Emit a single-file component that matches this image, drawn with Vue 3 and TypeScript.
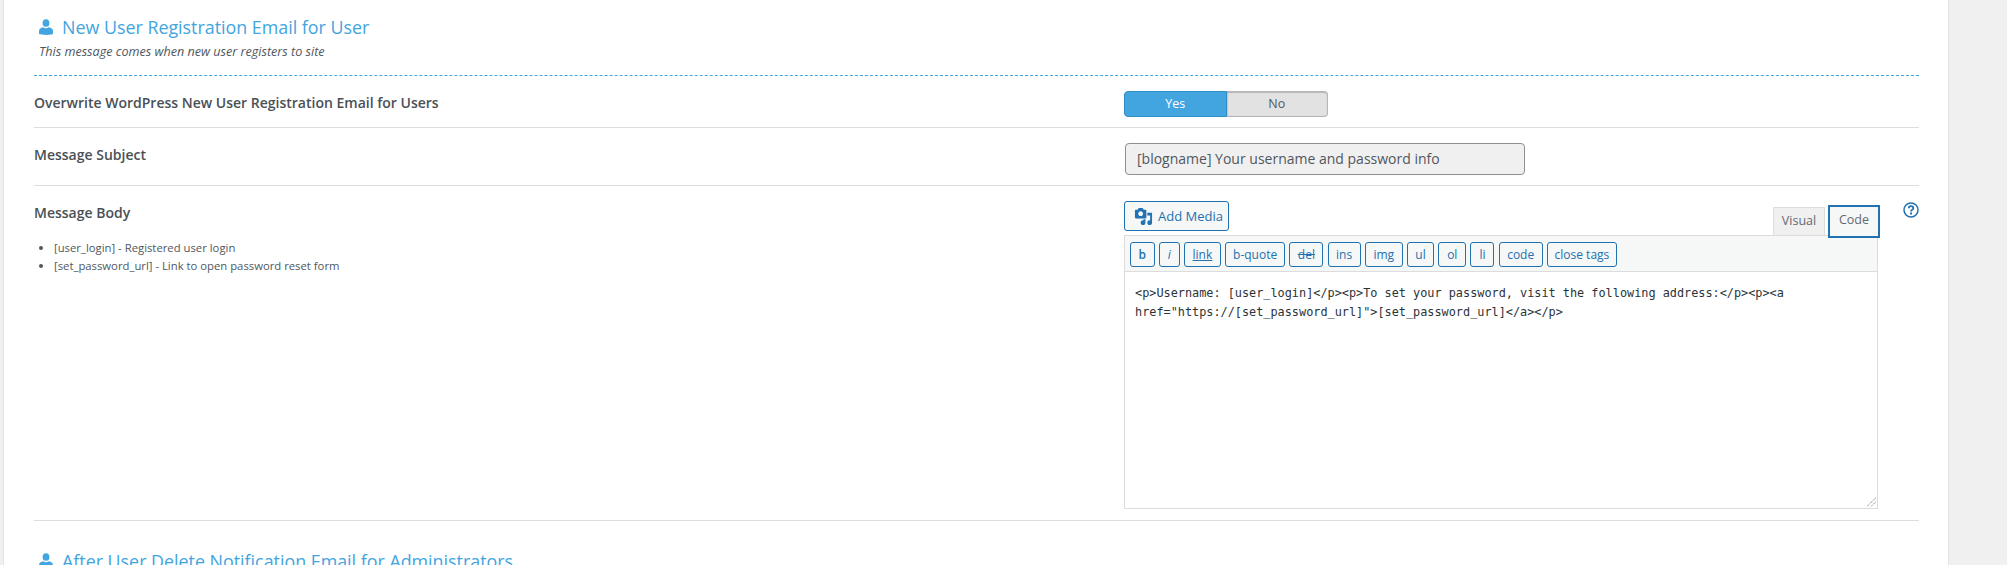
<script setup lang="ts">
interface Tag { label: string; width: number }
const tags: Tag[] = [
  { label: 'b', width: 24.5 },
  { label: 'i', width: 21 },
  { label: 'link', width: 37 },
  { label: 'b-quote', width: 60 },
  { label: 'del', width: 34 },
  { label: 'ins', width: 33 },
  { label: 'img', width: 38 },
  { label: 'ul', width: 27 },
  { label: 'ol', width: 28 },
  { label: 'li', width: 24 },
  { label: 'code', width: 44 },
  { label: 'close tags', width: 70 },
]
const body = '<p>Username: [user_login]</p><p>To set your password, visit the following address:</p><p><a href="https://[set_password_url]">[set_password_url]</a></p>'
</script>

<template>
  <div class="page">
    <main class="panel">
      <header class="head">
        <h2 class="title">
          <svg class="person" viewBox="0 0 16 18"><ellipse cx="8" cy="4.400" rx="3.900" ry="4.400" /><path d="M0 16.500v-3C0 11 2.300 9.800 4.800 9.200c.9.900 2 1.300 3.200 1.300s2.300-.4 3.200-1.300C13.700 9.800 16 11 16 13.500v3c0 .9-1.600 1.500-8 1.500s-8-.6-8-1.500z" /></svg>
          New User Registration Email for User
        </h2>
        <p class="sub">This message comes when new user registers to site</p>
      </header>

      <section class="row row-toggle">
        <div class="label">Overwrite WordPress New User Registration Email for Users</div>
        <div class="toggle"><span class="yes">Yes</span><span class="no">No</span></div>
      </section>

      <section class="row row-subject">
        <div class="label">Message Subject</div>
        <div class="subject">[blogname] Your username and password info</div>
      </section>

      <section class="row row-body">
        <div class="left">
          <div class="label">Message Body</div>
          <ul class="hints">
            <li>[user_login] - Registered user login</li>
            <li>[set_password_url] - Link to open password reset form</li>
          </ul>
        </div>
        <div class="editor">
          <div class="editor-top">
            <button class="media">
              <svg class="media-ic" viewBox="0 0 20 20"><path fill-rule="evenodd" d="M13 11V4c0-.55-.45-1-1-1h-1.670L9 1H5L3.670 3H2c-.55 0-1 .45-1 1v7c0 .55.45 1 1 1h10c.55 0 1-.45 1-1zM7 4.500c1.380 0 2.500 1.120 2.500 2.500S8.380 9.500 7 9.500 4.500 8.380 4.500 7 5.620 4.500 7 4.500zM14 6h5v10.500c0 1.380-1.120 2.500-2.500 2.500S14 17.880 14 16.500s1.120-2.500 2.500-2.500c.17 0 .34.020.5.050V9h-3V6zm-4 8.050V13h2v3.500c0 1.380-1.120 2.500-2.500 2.500S7 17.880 7 16.500 8.120 14 9.500 14c.17 0 .34.020.5.050z" /></svg>
              Add Media
            </button>
            <div class="tabs">
              <span class="tab">Visual</span>
              <span class="tab active">Code</span>
            </div>
          </div>
          <div class="toolbar">
            <button
              v-for="t in tags"
              :key="t.label"
              class="qt"
              :class="'qt-' + t.label.replace(' ', '-')"
              :style="{ width: t.width + 'px' }"
            >{{ t.label }}</button>
          </div>
          <div class="code">{{ body }}<svg class="grip" viewBox="0 0 10 10"><path d="M9.500 1 1 9.500M9.500 5 5 9.500" /></svg></div>
        </div>
        <svg class="help" viewBox="0 0 16 16"><circle cx="8" cy="8" r="7" /><path class="q" d="M5.700 6.300C5.800 5 6.800 4.200 8 4.200s2.300.8 2.300 2c0 1.700-2.300 1.600-2.300 3.300" /><path class="dot" d="M7 10.600h2v1.900H7z" /></svg>
      </section>

      <h2 class="title next">
        <svg class="person" viewBox="0 0 16 18"><ellipse cx="8" cy="4.400" rx="3.900" ry="4.400" /><path d="M0 16.500v-3C0 11 2.300 9.800 4.800 9.200c.9.900 2 1.300 3.200 1.300s2.300-.4 3.200-1.300C13.700 9.800 16 11 16 13.500v3c0 .9-1.600 1.500-8 1.500s-8-.6-8-1.500z" /></svg>
        After User Delete Notification Email for Administrators
      </h2>
    </main>
  </div>
</template>

<style>
html, body { margin: 0; background: #f0f0f0; overflow: hidden; }
</style>

<style scoped>
.page { height: 565px; overflow: hidden; padding-left: 3px; font-family: "Open Sans", sans-serif; color: #50575e; }
.panel { width: 1946px; height: 565px; box-sizing: border-box; background: #fff; border-left: 1px solid #e2e2e2; border-right: 1px solid #e2e2e2; padding: 0 29px 0 30px; overflow: hidden; }
.head { height: 76px; box-sizing: border-box; padding: 13px 0 0 5px; border-bottom: 1px dashed #42a5e0; }
.title { margin: 0; display: flex; align-items: center; gap: 9px; font-size: 17.850px; line-height: 28px; font-weight: 400; color: #42a5e0; }
.person { width: 14px; height: 16px; fill: #42a5e0; flex: none; }
.sub { margin: 2px 0 0; font-size: 12.600px; line-height: 18px; font-style: italic; color: #50575e; }
.row { display: grid; grid-template-columns: 1090px 1fr; border-bottom: 1px solid #dedede; box-sizing: border-box; }
.row-toggle { height: 52px; padding-top: 15px; }
.row-subject { height: 58px; padding-top: 15px; }
.row-body { height: 335px; padding-top: 15px; position: relative; }
.label { font-size: 14px; font-weight: 600; line-height: 24px; color: #4a5056; }
.toggle { display: flex; width: 204px; height: 26px; font-size: 12.500px; line-height: 24px; text-align: center; }
.yes { flex: 1; background: #42a5e0; color: #fff; border: 1px solid #2f8cc4; border-radius: 4px 0 0 4px; }
.no { flex: 1; background: #e2e2e2; color: #50575e; border: 1px solid #b5b5b5; border-left: 0; border-radius: 0 4px 4px 0; box-shadow: inset 0 1px 1px rgba(0, 0, 0, .18), inset 1px 0 1px rgba(0, 0, 0, .12); }
.subject { margin: 0 0 0 1px; width: 400px; height: 32px; box-sizing: border-box; padding: 0 11px; background: #f0f0f1; border: 1px solid #8c8f94; border-radius: 4px; font-size: 14px; line-height: 30px; color: #50575e; }
.hints { margin: 14px 0 0; padding: 0 0 0 20px; font-size: 11.300px; line-height: 18px; color: #50575e; }
.editor { width: 754px; display: flex; flex-direction: column; }
.editor-top { display: flex; justify-content: space-between; align-items: flex-start; height: 34px; }
.media { display: inline-flex; align-items: center; gap: 5px; width: 105px; height: 30px; padding: 0 0 0 9px; box-sizing: border-box; background: #f6f7f7; border: 1px solid #2271b1; border-radius: 3px; font: 13px "Open Sans", sans-serif; color: #2271b1; }
.media-ic { width: 19px; height: 19px; fill: #2271b1; flex: none; }
.tabs { position: relative; z-index: 1; display: flex; align-items: flex-end; gap: 3px; height: 37px; margin-right: -2px; }
.tab { box-sizing: border-box; width: 52px; height: 28px; margin-bottom: 3px; border: 1px solid #dcdcde; border-bottom: 0; background: #f0f0f1; font-size: 12.500px; line-height: 26px; text-align: center; color: #646970; }
.tab.active { height: 33px; margin-bottom: 0; background: #f6f7f7; border: 2px solid #2271b1; line-height: 26px; }
.toolbar { display: flex; gap: 4.230px; height: 37px; box-sizing: border-box; padding: 6px 5px 0 5px; background: #f6f7f7; border: 1px solid #dcdcde; }
.qt { height: 25px; padding: 0; flex: none; box-sizing: border-box; background: #f6f7f7; border: 1px solid #2271b1; border-radius: 3px; font: 12px/22px "Open Sans", sans-serif; color: #2271b1; white-space: nowrap; }
.qt-b { font-weight: 600; }
.qt-i { font-style: italic; }
.qt-link { text-decoration: underline; }
.qt-del { text-decoration: line-through; }
.code { position: relative; height: 237px; box-sizing: border-box; padding: 12px 10px; border: 1px solid #dcdcde; border-top: 0; font-family: "DejaVu Sans Mono", monospace; font-size: 11.850px; line-height: 19px; color: #2c3338; white-space: pre-wrap; overflow-wrap: break-word; }
.grip { position: absolute; right: 1px; bottom: 1px; width: 10px; height: 10px; fill: none; stroke: #555; stroke-width: 1; stroke-dasharray: 1 1; }
.help { position: absolute; left: 1869px; top: 16px; width: 16px; height: 16px; fill: none; stroke: #2271b1; stroke-width: 1.500; }
.help .q { stroke-width: 1.800; }
.help .dot { fill: #2271b1; stroke: none; }
.next { margin: 26px 0 0 5px; }
</style>
